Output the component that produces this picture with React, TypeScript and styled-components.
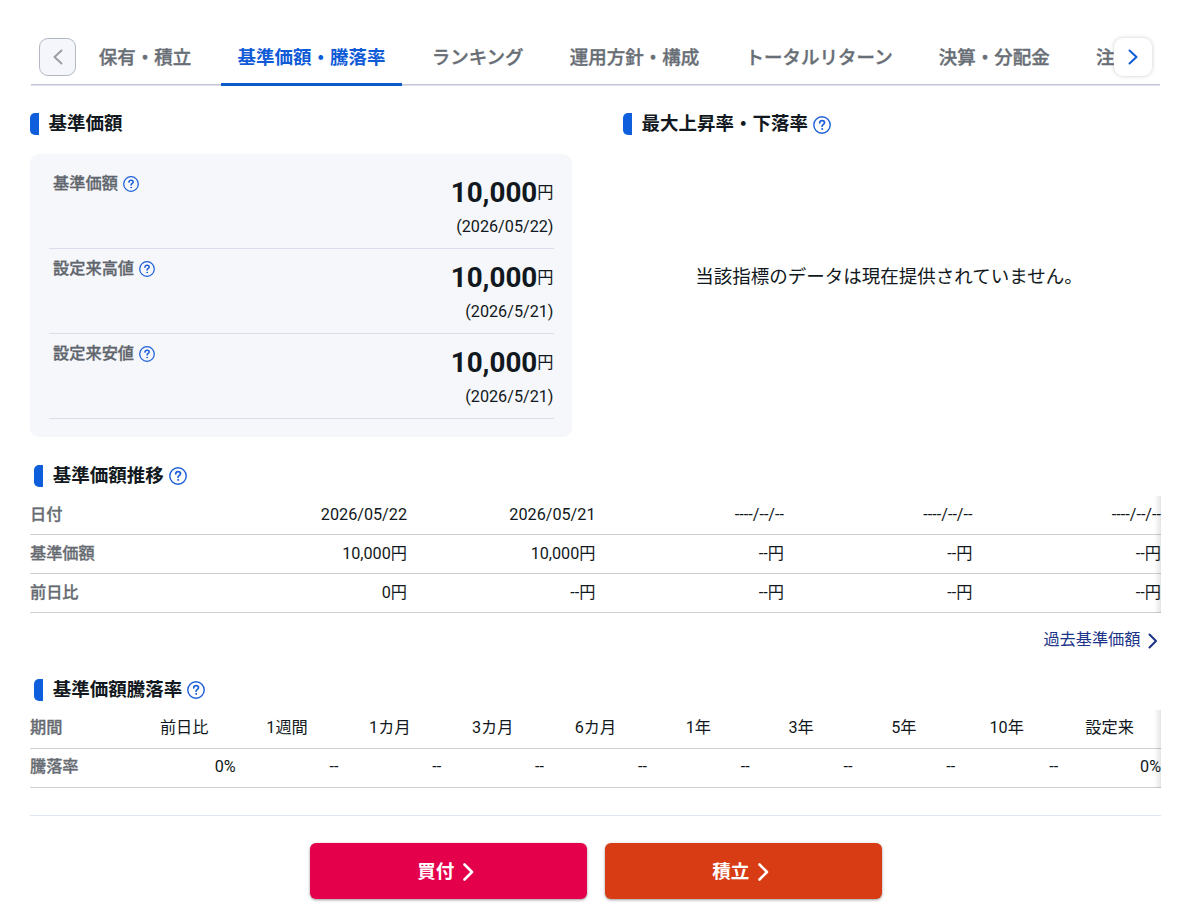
import React from "react";
import styled, { createGlobalStyle, css } from "styled-components";

const GlobalStyle = createGlobalStyle`
  *, *::before, *::after { box-sizing: border-box; }
  body {
    margin: 0;
    background: #fff;
    color: #111820;
    font-family: Roboto, "Noto Sans CJK JP", sans-serif;
    font-size: 16.2px;
    line-height: 24px;
  }
  h2 { margin: 0; }
  button { font-family: inherit; cursor: pointer; }
  a { text-decoration: none; }
`;

const Page = styled.main`
  width: 1200px;
  height: 924px;
  padding: 30px 39px 0 30px;
  display: flex;
  flex-direction: column;
  overflow: hidden;
`;

const TabBar = styled.nav`
  position: relative;
  flex: none;
  height: 56px;
  margin-left: 1px;
  width: 1129px;
`;

const TabList = styled.div`
  display: flex;
  height: 56px;
  gap: 13.85px;
  padding-left: 51.5px;
  overflow: hidden;
  background: linear-gradient(#c3c6d4, #c3c6d4) 0 54px / 100% 1.5px no-repeat;
`;

const Tab = styled.a<{ $active?: boolean }>`
  flex: none;
  height: 56px;
  padding: 15px 16.2px 0;
  border-bottom: 3px solid ${(p) => (p.$active ? "#0d5bcb" : "transparent")};
  color: ${(p) => (p.$active ? "#0f5bd7" : "#686e75")};
  font-size: 18.5px;
  line-height: 27px;
  font-weight: ${(p) => (p.$active ? 700 : 500)};
  -webkit-text-stroke: ${(p) => (p.$active ? 0 : 0.35)}px currentColor;
  white-space: nowrap;
`;

const ScrollButton = styled.button<{ $side: "left" | "right" }>`
  position: absolute;
  display: flex;
  align-items: center;
  justify-content: center;
  padding: 0;
  border-radius: 9px;
  ${(p) =>
    p.$side === "left"
      ? css`
          left: 8px;
          top: 8px;
          width: 37px;
          height: 38px;
          color: #9b9ea6;
          background: #f5f6fb;
          border: 1px solid #b4b8c5;
        `
      : css`
          right: 8px;
          top: 8px;
          width: 38px;
          height: 38px;
          color: #0f5bd7;
          background: #fff;
          border: 0;
          box-shadow: 0 0 4px rgba(0, 0, 0, 0.2);
        `}

  svg { margin-bottom: 1px; }
`;

const Columns = styled.div`
  display: grid;
  grid-template-columns: 542px 538px;
  column-gap: 51px;
  height: 351px;
  padding-top: 24px;
`;

const Heading = styled.h2<{ $indent?: boolean }>`
  display: flex;
  align-items: center;
  height: 28px;
  padding-left: ${(p) => (p.$indent ? 4.3 : 0)}px;
  padding-top: ${(p) => (p.$indent ? 1 : 0)}px;
  font-size: 18.5px;
  line-height: 28px;
  font-weight: 700;

  &::before {
    content: "";
    width: 9px;
    height: 22px;
    margin-right: 9.5px;
    border-radius: 5px 0 0 5px;
    background: #0f5fdc;
  }
`;

const HelpMark = styled.svg<{ $size: number }>`
  flex: none;
  width: ${(p) => p.$size}px;
  height: ${(p) => p.$size}px;
  margin: 1px 0 0 4.7px;
  color: #1c5fd8;
`;

const PricePanel = styled.dl`
  margin: 16px 0 0;
  height: 283px;
  padding: 9.5px 18.5px;
  border-radius: 9px;
  background: #f5f7fb;
`;

const PriceRow = styled.div`
  display: flex;
  justify-content: space-between;
  height: 85px;
  border-bottom: 1px solid #d9dfea;
`;

const PriceLabel = styled.dt`
  display: flex;
  align-items: center;
  height: 24px;
  margin-top: 8.5px;
  padding-left: 4.6px;
  color: #5f656c;
  font-weight: 500;
  -webkit-text-stroke: 0.3px currentColor;

  svg { margin-top: 0; }
`;

const PriceValue = styled.dd`
  margin: 0;
  padding-top: 11px;
  text-align: right;
`;

const Amount = styled.div`
  display: flex;
  align-items: center;
  justify-content: flex-end;
  height: 36px;
  line-height: 36px;
  white-space: nowrap;

  strong {
    font-size: 27.8px;
    font-weight: 700;
  }
`;

const AsOf = styled.div`
  height: 24px;
  margin-top: 4px;
`;

const EmptyNotice = styled.p`
  margin: 125px 0 0;
  padding-right: 6px;
  text-align: center;
  font-size: 18.5px;
  line-height: 28px;
`;

const DataSection = styled.section<{ $height: number }>`
  flex: none;
  height: ${(p) => p.$height}px;
  padding-top: 24px;
  width: 1131px;
`;

const TableFrame = styled.div`
  position: relative;
  margin-top: 7px;

  &::after {
    content: "";
    position: absolute;
    inset: 0 0 0 auto;
    width: 7px;
    background: linear-gradient(to right, rgba(0, 0, 0, 0), rgba(0, 0, 0, 0.1));
  }
`;

const Table = styled.table<{ $raised?: boolean }>`
  width: 100%;
  table-layout: fixed;
  border-collapse: separate;
  border-spacing: 0;

  th, td {
    height: 39px;
    padding: 0 0 ${(p) => (p.$raised ? 2 : 0)}px;
    border-bottom: 1px solid #ccd0d5;
    white-space: nowrap;
  }
`;

const Cell = styled.td<{ $align?: "center" }>`
  text-align: ${(p) => p.$align ?? "right"};
`;

const RowHead = styled.th`
  text-align: left;
  color: #666b72;
  font-weight: 500;
  -webkit-text-stroke: 0.3px currentColor;
`;

const HistoryLink = styled.a`
  display: flex;
  align-items: center;
  justify-content: flex-end;
  gap: 7px;
  height: 24px;
  margin-top: 15px;
  padding-right: 4px;
  color: #1c3488;

  svg { margin-top: 1px; }
`;

const Actions = styled.footer`
  display: flex;
  flex: none;
  width: 1131px;
  justify-content: center;
  gap: 18px;
  padding-top: 27px;
  border-top: 1px solid #dfe6ef;
`;

const ActionButton = styled.button<{ $color: string }>`
  display: flex;
  align-items: center;
  justify-content: center;
  gap: 9px;
  width: 277px;
  height: 56px;
  padding: 0 5px 3px 0;
  border: 0;
  border-radius: 6px;
  background: ${(p) => p.$color};
  box-shadow: 0 1px 3px rgba(0, 0, 0, 0.4);
  color: #fff;
  font-size: 18.5px;
  font-weight: 700;

  svg { margin-top: 4px; }
`;

const Help = ({ size }: { size: number }) => (
  <HelpMark $size={size} viewBox="0 0 18 18" fill="none" stroke="currentColor" strokeLinecap="round" strokeLinejoin="round">
    <circle cx="9" cy="9" r="8.2" strokeWidth="1.4" />
    <path d="M6.7 6.9c.1-1.3 1-2.2 2.4-2.2s2.4.8 2.4 2c0 1.6-2.4 1.8-2.4 3.5" strokeWidth="1.7" />
    <circle cx="9.1" cy="12.9" r=".5" fill="currentColor" strokeWidth="1" />
  </HelpMark>
);

const Chevron = ({ w, h, stroke, left }: { w: number; h: number; stroke: number; left?: boolean }) => (
  <svg width={w + 3} height={h + 3} fill="none" stroke="currentColor" strokeWidth={stroke} strokeLinecap="round" strokeLinejoin="round">
    <path d={left ? `M${w + 1.5} 1.5L1.5 ${h / 2 + 1.5}l${w} ${h / 2}` : `M1.5 1.5l${w} ${h / 2}l-${w} ${h / 2}`} />
  </svg>
);

const tabs = ["保有・積立", "基準価額・騰落率", "ランキング", "運用方針・構成", "トータルリターン", "決算・分配金", "注文"];

const prices = [
  { label: "基準価額", date: "2026/05/22" },
  { label: "設定来高値", date: "2026/5/21" },
  { label: "設定来安値", date: "2026/5/21" },
];

const history = [
  ["日付", "2026/05/22", "2026/05/21", "----/--/--", "----/--/--", "----/--/--"],
  ["基準価額", "10,000円", "10,000円", "--円", "--円", "--円"],
  ["前日比", "0円", "--円", "--円", "--円", "--円"],
];

const rates = [
  ["期間", "前日比", "1週間", "1カ月", "3カ月", "6カ月", "1年", "3年", "5年", "10年", "設定来"],
  ["騰落率", "0%", "--", "--", "--", "--", "--", "--", "--", "--", "0%"],
];

const DataTable = ({ rows, periods }: { rows: string[][]; periods?: boolean }) => (
  <TableFrame>
    <Table $raised={periods}>
      <tbody>
        {rows.map(([head, ...cells], r) => (
          <tr key={head}>
            <RowHead scope="row">{head}</RowHead>
            {cells.map((value, i) => (
              <Cell key={i} $align={periods && r === 0 ? "center" : undefined}>
                {value}
              </Cell>
            ))}
          </tr>
        ))}
      </tbody>
    </Table>
  </TableFrame>
);

export default function App() {
  return (
    <Page>
      <GlobalStyle />
      <TabBar>
        <TabList>
          {tabs.map((name, i) => (
            <Tab key={name} $active={i === 1}>
              {name}
            </Tab>
          ))}
        </TabList>
        <ScrollButton $side="left" aria-label="前へ">
          <Chevron w={7} h={13} stroke={2} left />
        </ScrollButton>
        <ScrollButton $side="right" aria-label="次へ">
          <Chevron w={7} h={13} stroke={2} />
        </ScrollButton>
      </TabBar>

      <Columns>
        <section>
          <Heading>基準価額</Heading>
          <PricePanel>
            {prices.map((p) => (
              <PriceRow key={p.label}>
                <PriceLabel>
                  {p.label}
                  <Help size={16} />
                </PriceLabel>
                <PriceValue>
                  <Amount>
                    <strong>10,000</strong>円
                  </Amount>
                  <AsOf>({p.date})</AsOf>
                </PriceValue>
              </PriceRow>
            ))}
          </PricePanel>
        </section>
        <section>
          <Heading>
            最大上昇率・下落率
            <Help size={18} />
          </Heading>
          <EmptyNotice>当該指標のデータは現在提供されていません。</EmptyNotice>
        </section>
      </Columns>

      <DataSection $height={214}>
        <Heading $indent>
          基準価額推移
          <Help size={18} />
        </Heading>
        <DataTable rows={history} />
        <HistoryLink>
          過去基準価額
          <Chevron w={6.5} h={13} stroke={2} />
        </HistoryLink>
      </DataSection>

      <DataSection $height={164}>
        <Heading $indent>
          基準価額騰落率
          <Help size={18} />
        </Heading>
        <DataTable rows={rates} periods />
      </DataSection>

      <Actions>
        <ActionButton $color="#e5004b">
          買付
          <Chevron w={7.5} h={15} stroke={2.6} />
        </ActionButton>
        <ActionButton $color="#d73c15">
          積立
          <Chevron w={7.5} h={15} stroke={2.6} />
        </ActionButton>
      </Actions>
    </Page>
  );
}
